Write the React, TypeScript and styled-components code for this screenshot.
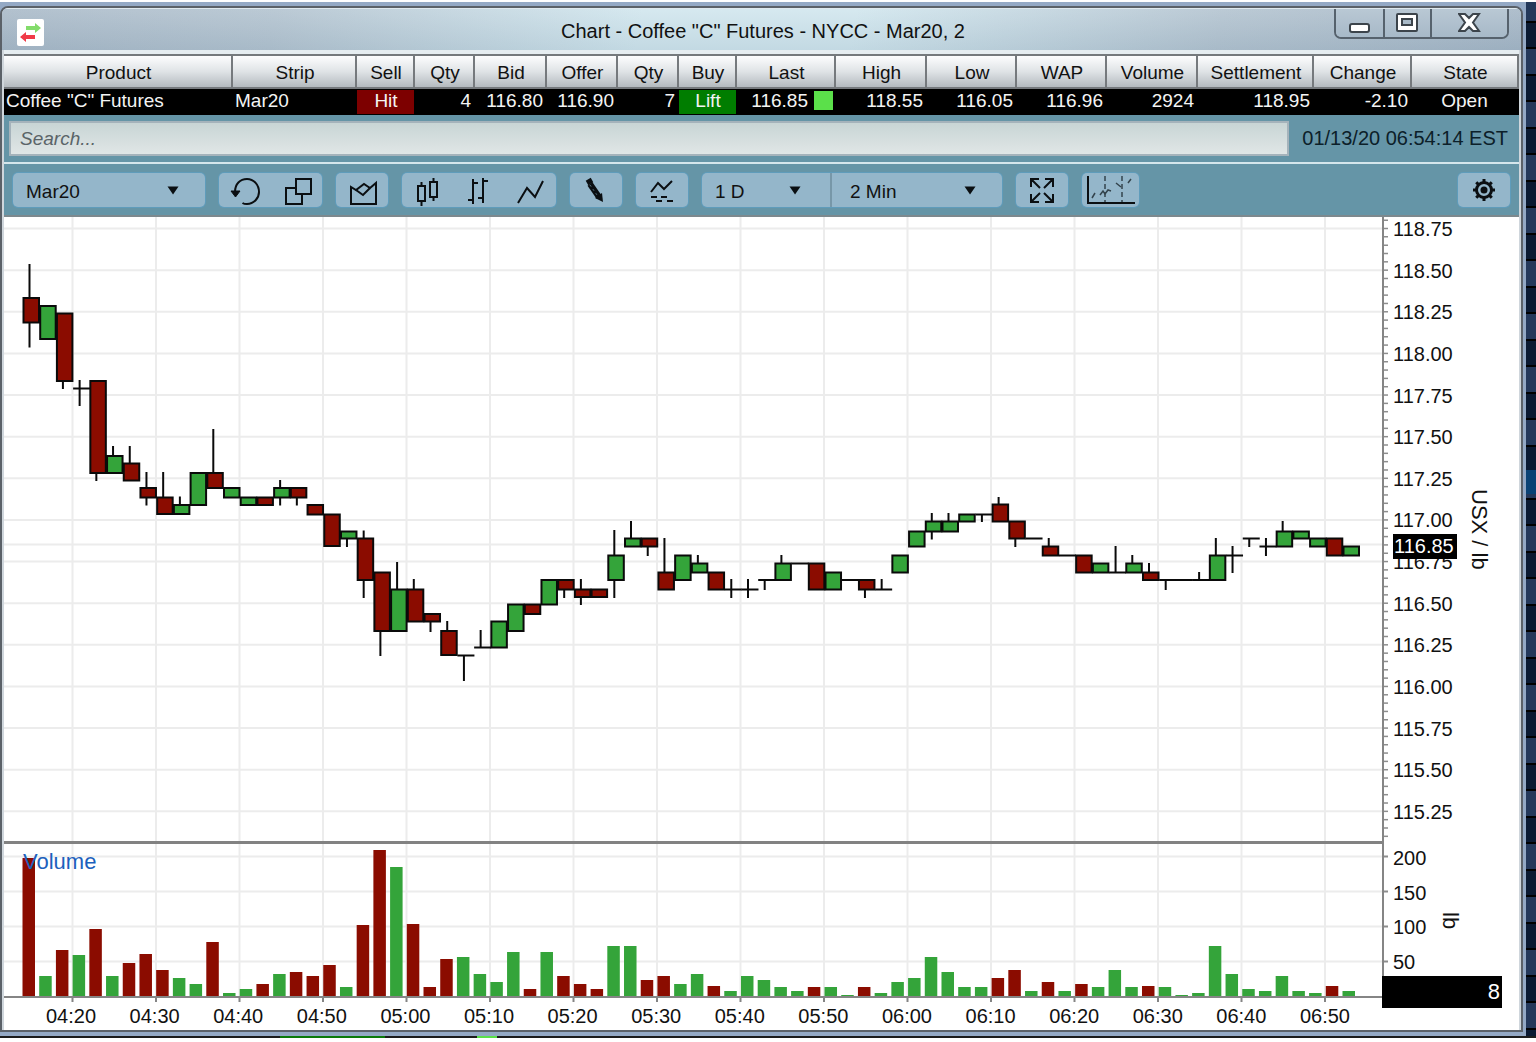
import React from "react";
import styled, { createGlobalStyle, css } from "styled-components";

const UI_FONT = `"Liberation Sans", Arial, Helvetica, sans-serif`;
const GREEN = "#34a43a";
const RED = "#8b0c00";

const GlobalStyle = createGlobalStyle`
  *, *::before, *::after { box-sizing: border-box; }
  body {
    margin: 0;
    background: #fff;
    font-family: ${UI_FONT};
    font-size: 19px;
    color: #111;
  }
  button, input, select { font: inherit; color: inherit; }
`;

/* ---------- window shell ---------- */

const Desktop = styled.div`
  margin: 2px 0 4px;
  padding-right: 10px;
  background:
    linear-gradient(#0a4274, #0a4274) right 468px / 10px 24px no-repeat,
    repeating-linear-gradient(
      180deg,
      #24385a 0 19px,
      #000 19px 21px,
      #0a1931 21px 45px,
      #000 45px 47px,
      #24385a 47px 53px
    );
`;

const Frame = styled.div`
  padding: 4px 3px 4px 0;
  background: #94a9c5;
`;

const Window = styled.main`
  border: 2px solid #5b6168;
  border-radius: 8px 8px 0 0;
  padding: 0 2px;
  background: #cfd6dc;
  overflow: hidden;
`;

const TitleBar = styled.header`
  display: flex;
  justify-content: space-between;
  height: 42px;
  margin: 0 -2px;
  padding: 0 12px 0 15px;
  border-top: 1px solid #dfe9ee;
  background:
    linear-gradient(180deg, rgba(255, 255, 255, 0.14), rgba(120, 145, 165, 0.14)),
    linear-gradient(100deg, #a6b7c6 0%, #b0c1ce 18%, #cfe5ed 42%, #cfe5ed 56%, #b0c1ce 80%, #a2b4c4 100%);
`;

const TitleSide = styled.div<{ $end?: boolean }>`
  display: flex;
  flex: 1;
  justify-content: ${(p) => (p.$end ? "flex-end" : "flex-start")};
`;

const AppIcon = styled.svg`
  width: 27px;
  height: 27px;
  margin-top: 10px;
`;

const Title = styled.h1`
  margin: 0;
  font-size: 20px;
  font-weight: 400;
  line-height: 45px;
  white-space: nowrap;
`;

const WindowButtons = styled.div`
  display: flex;
  height: 30px;
  border: 2px solid #56626d;
  border-top: 0;
  border-radius: 0 0 7px 7px;
  overflow: hidden;
`;

const WindowButton = styled.button<{ $wide?: boolean }>`
  display: grid;
  place-items: center;
  width: ${(p) => (p.$wide ? "77px" : "47px")};
  padding: 0;
  border: 0;
  background: linear-gradient(180deg, #b9c8d4, #a7b9c8);
  & + & {
    border-left: 2px solid #56626d;
  }
`;

/* ---------- quote table ---------- */

const Quotes = styled.table`
  width: 100%;
  table-layout: fixed;
  border-collapse: separate;
  border-spacing: 0;
  border-top: 2px solid #75797d;
  background: #000;
  box-shadow: 0 -4px 0 #e6edf1;
  margin-top: 4px;
`;

const HeadCell = styled.th`
  height: 33px;
  padding: 3px 0 0 2px;
  border-right: 2px solid #75797d;
  border-bottom: 2px solid #75797d;
  background: linear-gradient(180deg, #fdfdfe 0%, #dfe3e6 50%, #b4babf 100%);
  font-weight: 400;
  line-height: 26px;
  white-space: nowrap;
`;

const cellTones = { none: "transparent", sell: "#7d0000", buy: "#007d00" };

const DataCell = styled.td<{ $align: "left" | "right" | "center"; $tone: keyof typeof cellTones }>`
  height: 26px;
  padding: 0 3px 2px 2px;
  border: solid #000;
  border-width: 1px 1px 1px 0;
  background: ${(p) => cellTones[p.$tone]};
  color: #f4f4f4;
  line-height: 22px;
  text-align: ${(p) => p.$align};
  white-space: nowrap;
`;

const CellButton = styled.button`
  display: block;
  width: 100%;
  padding: 0 0 0 2px;
  border: 0;
  background: none;
  color: #f4f4f4;
  line-height: 22px;
`;

const Uptick = styled.span`
  display: inline-block;
  width: 19px;
  height: 19px;
  margin: 1px -1px 0 6px;
  vertical-align: top;
  background: #5be04a;
`;

/* ---------- search and toolbar ---------- */

const SearchRow = styled.div`
  display: flex;
  align-items: center;
  gap: 12px;
  height: 47px;
  padding: 0 11px 0 5px;
  background: #6595a7;
`;

const SearchInput = styled.input`
  flex: 1;
  min-width: 0;
  height: 35px;
  padding: 0 9px;
  border: 2px solid #a5b3bb;
  border-radius: 0;
  background: linear-gradient(180deg, #c8d5d5, #e0e6e6);
  &::placeholder {
    color: #5a6468;
    font-style: italic;
    opacity: 1;
  }
`;

const Clock = styled.time`
  min-width: 207px;
  color: #0c2029;
  font-size: 20px;
  text-align: right;
  white-space: nowrap;
`;

const Toolbar = styled.div`
  display: flex;
  gap: 14px;
  height: 55px;
  padding: 9px 9px 10px;
  border-top: 2px solid #d5e6ec;
  border-bottom: 2px solid #7d898e;
  background: #6595a7;
`;

const Group = styled.div<{ $end?: boolean }>`
  display: flex;
  height: 34px;
  padding-right: 1px;
  border-radius: 5px;
  background: #94b6ca;
  box-shadow: 0 0 0 1px #5f9cbb;
  ${(p) => p.$end && css`margin-left: auto;`}
`;

const ToolButton = styled.button<{ $wide?: boolean }>`
  display: grid;
  place-items: center;
  width: ${(p) => (p.$wide ? "56px" : "51px")};
  height: 34px;
  padding: 0;
  border: 0;
  background: none;
`;

const SelectWrap = styled.div<{ $width: number; $arrow: number; $split?: boolean }>`
  position: relative;
  display: flex;
  width: ${(p) => p.$width}px;
  ${(p) => p.$split && css`border-left: 2px solid #7797a8;`}
  svg {
    position: absolute;
    top: 13px;
    right: ${(p) => p.$arrow}px;
    pointer-events: none;
  }
`;

const Select = styled.select<{ $inset: number }>`
  width: 100%;
  padding: 2px 0 0 ${(p) => p.$inset}px;
  border: 0;
  appearance: none;
  background: none;
`;

/* ---------- chart ---------- */

const Chart = styled.section`
  display: grid;
  grid-template-columns: minmax(0, 1fr) 137px;
  background: #fff;
`;

const Plot = styled.div<{ $height: number; $split?: boolean }>`
  position: relative;
  height: ${(p) => p.$height}px;
  ${(p) => p.$split && css`border-top: 3px solid #828282;`}
  > svg {
    display: block;
    width: 100%;
    height: 100%;
  }
`;

const Axis = styled.div`
  position: relative;
  display: flex;
  border-left: 2px solid #858585;
`;

const Ticks = styled.svg`
  width: 4px;
  height: 100%;
`;

const AxisLabels = styled.ol<{ $width: number; $pad: string }>`
  display: flex;
  flex-direction: column;
  justify-content: space-between;
  width: ${(p) => p.$width}px;
  margin: 0;
  padding: ${(p) => p.$pad};
  list-style: none;
  font-size: 20px;
  line-height: 18px;
`;

const AxisUnit = styled.span<{ $pad: string }>`
  padding: ${(p) => p.$pad};
  font-size: 22px;
  line-height: 22px;
  writing-mode: vertical-rl;
`;

const LastPrice = styled.output`
  position: absolute;
  top: 317px;
  left: 9px;
  width: 64px;
  padding-left: 1px;
  background: #000;
  color: #fff;
  font-size: 20px;
  line-height: 25px;
`;

const LastVolume = styled.output`
  position: absolute;
  right: 17px;
  bottom: -12px;
  left: -2px;
  padding-right: 2px;
  background: #000;
  color: #fff;
  font-size: 22px;
  line-height: 32px;
  text-align: right;
`;

const PanelName = styled.h2`
  position: absolute;
  top: 6px;
  left: 19px;
  margin: 0;
  color: #1c61bd;
  font-size: 22px;
  font-weight: 400;
  line-height: 24px;
`;

const TimeAxis = styled.div`
  height: 34px;
  border-top: 2px solid #858585;
  > svg {
    display: block;
    width: 100%;
    height: 4px;
  }
`;

const TimeLabels = styled.ol`
  display: flex;
  justify-content: space-between;
  margin: 0;
  padding: 2px 32px 0 42px;
  list-style: none;
  font-size: 20px;
  line-height: 24px;
`;

const TaskStrip = styled.div`
  height: 2px;
  margin-right: -10px;
  background: linear-gradient(
    90deg,
    #1c1c1c 0 280px,
    #0b7a0b 280px 385px,
    #1c1c1c 385px 477px,
    #5be04a 477px 497px,
    #1c1c1c 497px
  );
`;

/* ---------- data ---------- */

type Align = "left" | "right" | "center";
type Column = { name: string; width: number; value: string; align: Align; tone?: "sell" | "buy"; tick?: boolean };

const columns: Column[] = [
  { name: "Product", width: 229, value: 'Coffee "C" Futures', align: "left" },
  { name: "Strip", width: 124, value: "Mar20", align: "left" },
  { name: "Sell", width: 58, value: "Hit", align: "center", tone: "sell" },
  { name: "Qty", width: 60, value: "4", align: "right" },
  { name: "Bid", width: 72, value: "116.80", align: "right" },
  { name: "Offer", width: 71, value: "116.90", align: "right" },
  { name: "Qty", width: 61, value: "7", align: "right" },
  { name: "Buy", width: 58, value: "Lift", align: "center", tone: "buy" },
  { name: "Last", width: 99, value: "116.85", align: "right", tick: true },
  { name: "High", width: 91, value: "118.55", align: "right" },
  { name: "Low", width: 90, value: "116.05", align: "right" },
  { name: "WAP", width: 90, value: "116.96", align: "right" },
  { name: "Volume", width: 91, value: "2924", align: "right" },
  { name: "Settlement", width: 116, value: "118.95", align: "right" },
  { name: "Change", width: 98, value: "-2.10", align: "right" },
  { name: "State", width: 107, value: "Open", align: "center" },
];

/* [kind, body top, body bottom, wick top, wick bottom]; kind: r falling, g rising, d unchanged */
type Candle = [string, number, number, number?, number?];
const candles: Candle[] = [
  ["r", 298, 322.5, 264, 347.5], ["g", 306, 339], ["r", 313.5, 381, 313.5, 389], ["d", 388.5, 388.5, 380, 406],
  ["r", 381, 473, 381, 481], ["g", 456, 473, 446, 473], ["r", 463.5, 480.5, 446, 480], ["r", 488, 497.5, 472, 505.5],
  ["r", 497.5, 514, 472, 514], ["g", 505, 514, 496.5, 514], ["g", 473, 505], ["r", 473, 488, 429, 488],
  ["g", 488, 497.5], ["g", 497.5, 505], ["r", 497.5, 505], ["g", 488, 497.5, 480, 505.5],
  ["r", 488, 497.5, 488, 505.5], ["r", 505, 514.5], ["r", 514.5, 546], ["g", 531.5, 538.5, 531, 547],
  ["r", 538.5, 580, 530.5, 598], ["r", 572.5, 631, 572, 656], ["g", 589.5, 631, 562, 631], ["r", 589.5, 621.5, 579, 621],
  ["r", 614, 621.5, 614, 632], ["r", 631, 655, 621, 655], ["d", 655.5, 655.5, 655, 681], ["d", 647.5, 647.5, 630, 647],
  ["g", 621.5, 647.5], ["g", 604.5, 631], ["r", 604.5, 614], ["g", 580, 604.5],
  ["r", 580, 589.5, 580, 598], ["r", 589.5, 597, 579, 605], ["r", 589.5, 597], ["g", 555.5, 580, 530, 598],
  ["g", 538.5, 546.5, 521, 546], ["r", 538.5, 546.5, 538, 556], ["r", 572.5, 589.5, 538, 589], ["g", 555.5, 580],
  ["g", 563.5, 572.5, 555, 572], ["r", 572.5, 589.5], ["d", 589.5, 589.5, 579, 598], ["d", 589.5, 589.5, 579, 598],
  ["d", 580, 580, 580, 590], ["g", 563.5, 580, 555, 580], ["d", 563.5, 563.5], ["r", 563.5, 589.5],
  ["g", 572.5, 589.5], ["d", 580, 580], ["r", 580, 589.5, 580, 598], ["d", 589.5, 589.5, 579, 589],
  ["g", 555.5, 572.5], ["g", 531.5, 546.5], ["g", 521.5, 531.5, 513, 539.5], ["g", 521.5, 531.5, 513, 531],
  ["g", 514.5, 521.5], ["d", 514.5, 514.5, 514, 522], ["r", 504.5, 521.5, 497, 521], ["r", 521.5, 538.5, 521, 547],
  ["d", 538.5, 538.5], ["r", 546.5, 555.5, 538, 555], ["d", 555.5, 555.5], ["r", 555.5, 572.5],
  ["g", 563.5, 572.5], ["d", 572.5, 572.5, 546, 572], ["g", 563.5, 572.5, 555, 572], ["r", 572.5, 580, 563, 580],
  ["d", 580, 580, 580, 590], ["d", 580, 580], ["d", 580, 580, 572, 580], ["g", 555.5, 580, 538, 580],
  ["d", 555.5, 555.5, 546, 573], ["d", 538.5, 538.5, 538, 547], ["d", 546.5, 546.5, 538, 556], ["g", 531.5, 546.5, 521, 546],
  ["g", 531.5, 538.5], ["g", 538.5, 546.5], ["r", 538.5, 555.5], ["g", 546.5, 555.5],
];

const volumes =
  "r139 g21 r47 g42 r68 g21 r34 r43 r27 g19 g13 r55 g4 g8 r13 g23 r25 r21 r32 g10 r72 r147 g130 r73 r10 r38 g40 g23 g15 g45 " +
  "r8 g45 r21 r13 r8 g51 g51 r17 r21 g13 g23 r11 g6 g21 g17 g10 g6 r10 g10 g2 r10 g4 g15 g19 g40 g25 g10 g10 r19 r27 " +
  "g6 r15 g6 r13 g10 g27 g10 r11 g10 g2 g4 g51 g23 g8 g6 g21 g6 g4 r11 g6";

const bars = volumes.split(" ").map((v) => ({ up: v[0] === "g", height: Number(v.slice(1)) }));

const STEP = 1320 / 79;
const times = Array.from({ length: 16 }, (_, i) => {
  const minutes = 260 + i * 10;
  return `0${Math.floor(minutes / 60)}:${String(minutes % 60).padStart(2, "0")}`;
});
const timeX = times.map((_, i) => 72.5 + i * 83.5);
const prices = Array.from({ length: 15 }, (_, i) => (118.75 - i * 0.25).toFixed(2));
const volumeMarks = [200, 150, 100, 50];
const GRID = "#ececec";

/* ---------- drawings ---------- */

const Arrow = () => (
  <svg width="12" height="9" viewBox="0 0 12 9" aria-hidden="true">
    <path d="M0.5 0.5h11L6 8.5z" fill="#0a0f12" />
  </svg>
);

const Glyph = ({ w = 32, h = 32, children }: { w?: number; h?: number; children: React.ReactNode }) => (
  <svg width={w} height={h} viewBox={`0 0 ${w} ${h}`} fill="none" stroke="#0b0f12" strokeWidth="2" aria-hidden="true">
    {children}
  </svg>
);

const UndoGlyph = () => (
  <Glyph>
    <path d="M6 18C6 10 11 5 18 5c7 0 12 6 12 13 0 6-5 12-12 12-2 0-3 0-4.5-1" />
    <path d="M2 17h9l-4.5 6z" fill="#0b0f12" strokeWidth="1" />
  </Glyph>
);

const CopyGlyph = () => (
  <Glyph>
    <path d="M16 5h15v15H16z" />
    <path d="M16 14H6v16h16v-10" />
  </Glyph>
);

const AreaGlyph = () => (
  <Glyph>
    <path d="M5 30V13l5 3 8-6 6 4 6-5v21z" />
    <path d="M10 16l7 5 7-7" />
  </Glyph>
);

const CandleGlyph = () => (
  <Glyph>
    <path d="M6 12h7v15H6zM9.5 8v4M9.5 27v5M18 8h7v15h-7zM21.5 4v4M21.5 23v4" />
  </Glyph>
);

const BarGlyph = () => (
  <Glyph>
    <path d="M10 5v25M5 26h5M10 9h5M20 4v25M15 24h5M20 7h5" />
  </Glyph>
);

const LineGlyph = () => (
  <Glyph>
    <path d="M4 29l9-15 8 9 8-16" />
  </Glyph>
);

const PencilGlyph = () => (
  <Glyph>
    <path d="M7 9l5-3" strokeWidth="5" />
    <path d="M10 10l9 13" strokeWidth="6" />
    <path d="M10 11l7 10" stroke="#56707e" strokeWidth="1" strokeDasharray="2 3" />
    <path d="M15 24l7-5 1 9z" fill="#0b0f12" stroke="none" />
  </Glyph>
);

const StudyGlyph = () => (
  <Glyph>
    <path d="M5 18l7-9 6 6 8-8" />
    <path d="M5 23h6M15 23h6M10 27h6M21 27h6" />
  </Glyph>
);

const ExpandGlyph = () => (
  <Glyph>
    <path d="M5 13V5h8M5 5l9 9M19 5h8v8M27 5l-9 9M5 20v8h8M5 28l9-9M19 28h8v-8M27 28l-9-9" />
  </Glyph>
);

const SessionGlyph = () => (
  <Glyph w={50}>
    <path d="M3 2v27h47" strokeWidth="2" />
    <path d="M20 2v26M37 2v26" stroke="#33434c" strokeWidth="1.5" strokeDasharray="5 3" />
    <path d="M7 24l3-5M15 21l3-4 2 3 3-4 3 1M31 9l5 4M43 9l3-4" stroke="#33434c" strokeWidth="1.5" />
  </Glyph>
);

const GearGlyph = () => (
  <Glyph>
    <circle cx="16" cy="16" r="7.5" strokeWidth="3" />
    <circle cx="16" cy="16" r="3.5" fill="#0b0f12" stroke="none" />
    {[0, 45, 90, 135, 180, 225, 270, 315].map((a) => (
      <path key={a} d="M16 8V5" strokeWidth="3" transform={`rotate(${a} 16 16)`} />
    ))}
  </Glyph>
);

const PricePlot = () => (
  <svg viewBox="4 217 1378 624" preserveAspectRatio="none" role="img" aria-label="Price candles">
    <g stroke={GRID} strokeWidth="2">
      {prices.map((p, i) => (
        <path key={p} d={`M4 ${228.5 + i * 41.63}H1382`} />
      ))}
      <path d="M4 544.5H1382" />
      {timeX.map((x) => (
        <path key={x} d={`M${x} 217V841`} />
      ))}
    </g>
    <g stroke="#0a0a0a" strokeWidth="2">
      {candles.map(([kind, top, bottom, high, low], i) => {
        const x = 23.5 + i * STEP;
        return (
          <g key={i}>
            {high !== undefined && <path d={`M${x + 6} ${high}V${low}`} />}
            {kind === "d" ? (
              <path d={`M${x - 0.5} ${top}h17`} />
            ) : (
              <rect x={x} y={top} width="15.5" height={bottom - top} fill={kind === "g" ? GREEN : RED} />
            )}
          </g>
        );
      })}
    </g>
  </svg>
);

const VolumePlot = () => (
  <svg viewBox="4 844 1378 152" preserveAspectRatio="none" role="img" aria-label="Volume bars">
    <g stroke={GRID} strokeWidth="2">
      {volumeMarks.map((v, i) => (
        <path key={v} d={`M4 ${856.5 + i * 35}H1382`} />
      ))}
      {timeX.map((x) => (
        <path key={x} d={`M${x} 844V996`} />
      ))}
    </g>
    {bars.map((b, i) => (
      <rect key={i} x={22.5 + i * STEP} y={997 - b.height} width="12.5" height={b.height} fill={b.up ? GREEN : RED} />
    ))}
  </svg>
);

export default function App() {
  return (
    <>
      <GlobalStyle />
      <Desktop>
        <Frame>
          <Window>
            <TitleBar>
              <TitleSide>
                <AppIcon viewBox="0 0 27 27" aria-hidden="true">
                  <rect width="27" height="27" rx="2" fill="#fff" />
                  <path d="M9 7h9V4l6 5-6 5v-3H9z" fill="#83dc6b" />
                  <path d="M18 16H9v-3l-6 5 6 5v-3h9z" fill="#f03a48" />
                </AppIcon>
              </TitleSide>
              <Title>Chart - Coffee "C" Futures - NYCC - Mar20, 2</Title>
              <TitleSide $end>
                <WindowButtons>
                  <WindowButton aria-label="Minimize">
                    <svg width="22" height="22" aria-hidden="true">
                      <rect x="1" y="12" width="19" height="8" rx="2" fill="#fff" stroke="#3c444b" strokeWidth="2" />
                    </svg>
                  </WindowButton>
                  <WindowButton aria-label="Maximize">
                    <svg width="24" height="22" aria-hidden="true">
                      <rect x="1" y="2" width="20" height="17" rx="1" fill="#fff" stroke="#3c444b" strokeWidth="2" />
                      <rect x="6" y="7" width="10" height="6" fill="#a9bac8" stroke="#3c444b" strokeWidth="2" />
                    </svg>
                  </WindowButton>
                  <WindowButton $wide aria-label="Close">
                    <svg width="24" height="22" aria-hidden="true">
                      <path
                        d="M1 2h6l4 4 4-4h6l-6 8.5L21 19h-6l-4-4-4 4H1l6-8.5z"
                        fill="#fff"
                        stroke="#3c444b"
                        strokeWidth="2"
                      />
                    </svg>
                  </WindowButton>
                </WindowButtons>
              </TitleSide>
            </TitleBar>

            <Quotes>
              <colgroup>
                {columns.map((c, i) => (
                  <col key={i} width={c.width} />
                ))}
              </colgroup>
              <thead>
                <tr>
                  {columns.map((c, i) => (
                    <HeadCell key={i} scope="col">
                      {c.name}
                    </HeadCell>
                  ))}
                </tr>
              </thead>
              <tbody>
                <tr>
                  {columns.map((c, i) => (
                    <DataCell key={i} $align={c.align} $tone={c.tone ?? "none"}>
                      {c.tone ? <CellButton>{c.value}</CellButton> : c.value}
                      {c.tick && <Uptick />}
                    </DataCell>
                  ))}
                </tr>
              </tbody>
            </Quotes>

            <SearchRow>
              <SearchInput type="search" aria-label="Search" placeholder="Search..." />
              <Clock>01/13/20 06:54:14 EST</Clock>
            </SearchRow>

            <Toolbar>
              <Group>
                <SelectWrap $width={191} $arrow={25}>
                  <Select $inset={13} aria-label="Strip">
                    <option>Mar20</option>
                  </Select>
                  <Arrow />
                </SelectWrap>
              </Group>
              <Group>
                <ToolButton aria-label="Reset"><UndoGlyph /></ToolButton>
                <ToolButton aria-label="Duplicate"><CopyGlyph /></ToolButton>
              </Group>
              <Group>
                <ToolButton aria-label="Area view"><AreaGlyph /></ToolButton>
              </Group>
              <Group>
                <ToolButton aria-label="Candlesticks"><CandleGlyph /></ToolButton>
                <ToolButton aria-label="Bars"><BarGlyph /></ToolButton>
                <ToolButton aria-label="Line"><LineGlyph /></ToolButton>
              </Group>
              <Group>
                <ToolButton aria-label="Draw"><PencilGlyph /></ToolButton>
              </Group>
              <Group>
                <ToolButton aria-label="Studies"><StudyGlyph /></ToolButton>
              </Group>
              <Group>
                <SelectWrap $width={128} $arrow={29}>
                  <Select $inset={13} aria-label="Range">
                    <option>1 D</option>
                  </Select>
                  <Arrow />
                </SelectWrap>
                <SelectWrap $width={171} $arrow={25} $split>
                  <Select $inset={18} aria-label="Interval">
                    <option>2 Min</option>
                  </Select>
                  <Arrow />
                </SelectWrap>
              </Group>
              <Group>
                <ToolButton aria-label="Fit chart"><ExpandGlyph /></ToolButton>
              </Group>
              <Group>
                <ToolButton $wide aria-label="Session breaks"><SessionGlyph /></ToolButton>
              </Group>
              <Group $end>
                <ToolButton aria-label="Settings"><GearGlyph /></ToolButton>
              </Group>
            </Toolbar>

            <Chart>
              <Plot $height={624}>
                <PricePlot />
              </Plot>
              <Axis>
                <Ticks viewBox="0 217 4 624" preserveAspectRatio="none" aria-hidden="true">
                  {Array.from({ length: 75 }, (_, i) => (
                    <path key={i} d={`M0 ${220.2 + i * 8.326}h4`} stroke="#8d8d8d" strokeWidth="1.5" />
                  ))}
                </Ticks>
                <AxisLabels $width={72} $pad="3px 0 20px 5px">
                  {prices.map((p) => (
                    <li key={p}>{p}</li>
                  ))}
                </AxisLabels>
                <AxisUnit $pad="272px 0 0 8px">USX / lb</AxisUnit>
                <LastPrice>116.85</LastPrice>
              </Axis>

              <Plot $height={155} $split>
                <VolumePlot />
                <PanelName>Volume</PanelName>
              </Plot>
              <Axis>
                <Ticks viewBox="0 841 4 155" preserveAspectRatio="none" aria-hidden="true">
                  {volumeMarks.map((v, i) => (
                    <path key={v} d={`M0 ${856.5 + i * 35}h4`} stroke="#8d8d8d" strokeWidth="2" />
                  ))}
                </Ticks>
                <AxisLabels $width={51} $pad="8px 0 25px 5px">
                  {volumeMarks.map((v) => (
                    <li key={v}>{v}</li>
                  ))}
                </AxisLabels>
                <AxisUnit $pad="71px 0 0">lb</AxisUnit>
                <LastVolume>8</LastVolume>
              </Axis>

              <TimeAxis>
                <svg viewBox="4 0 1378 4" preserveAspectRatio="none" aria-hidden="true">
                  {timeX.map((x) => (
                    <path key={x} d={`M${x} 0v4`} stroke="#858585" strokeWidth="2" />
                  ))}
                </svg>
                <TimeLabels>
                  {times.map((t) => (
                    <li key={t}>{t}</li>
                  ))}
                </TimeLabels>
              </TimeAxis>
            </Chart>
          </Window>
        </Frame>
        <TaskStrip />
      </Desktop>
    </>
  );
}
